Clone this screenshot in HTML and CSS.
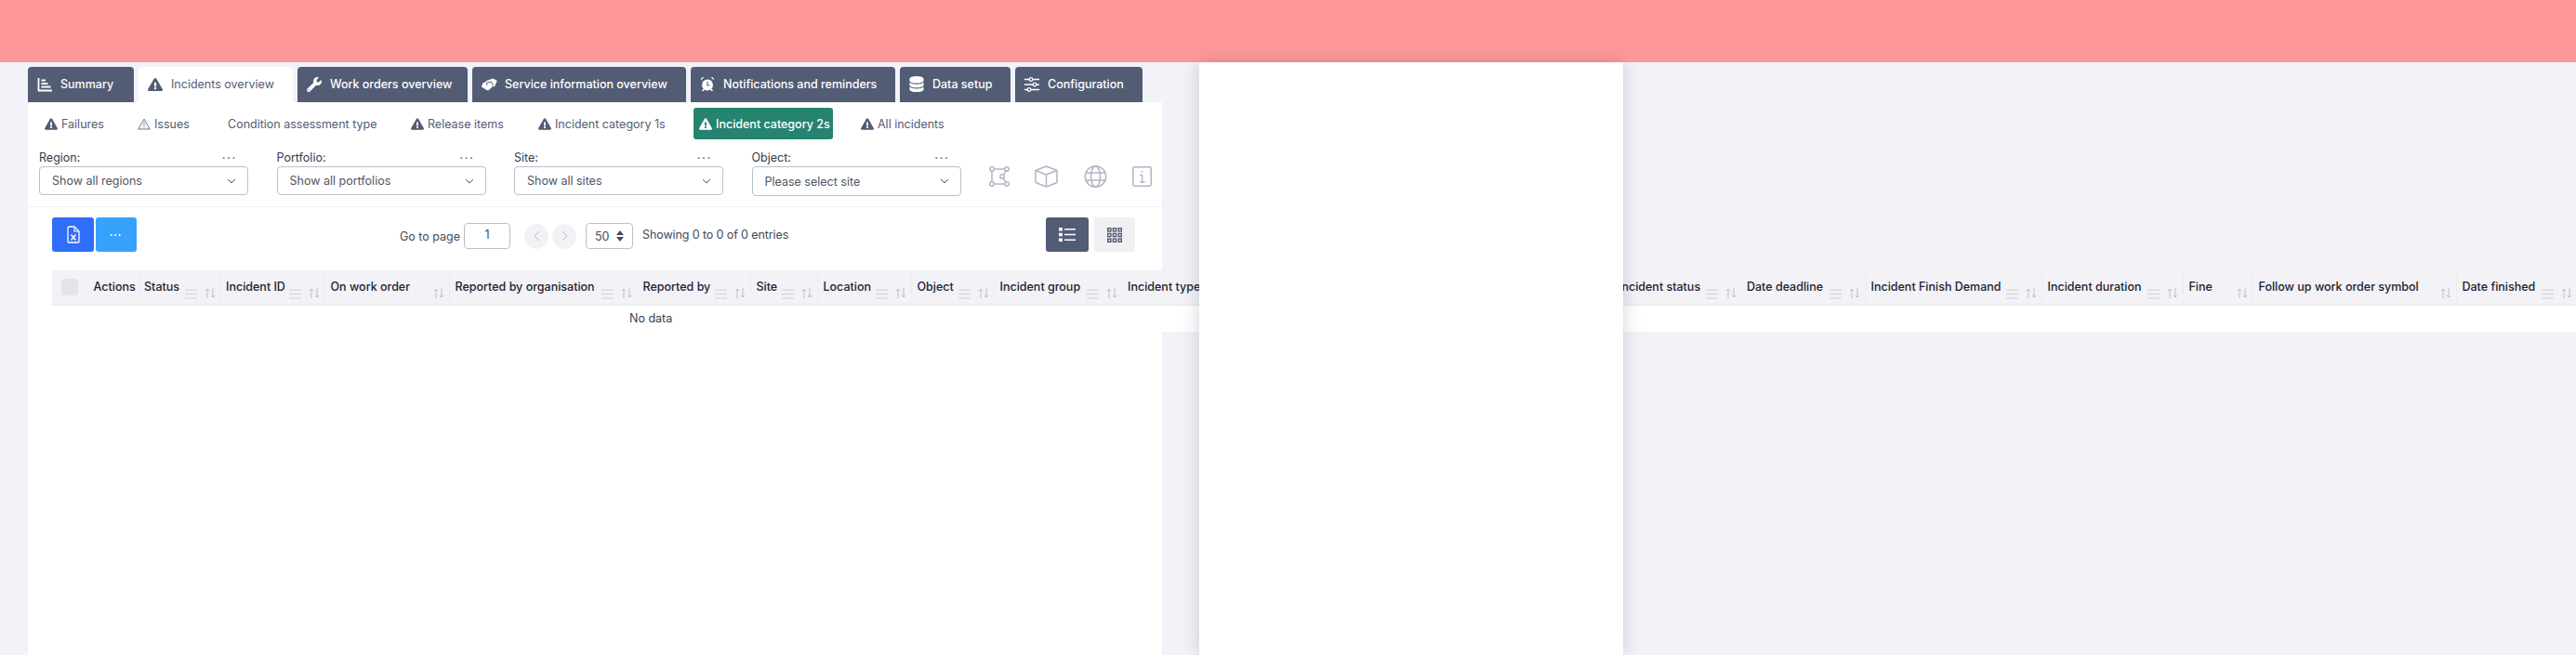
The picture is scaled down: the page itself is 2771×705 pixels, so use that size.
FILE: index.html
```html
<!DOCTYPE html>
<html lang="en">
<head>
<meta charset="utf-8">
<title>Incident category 2s</title>
<link rel="stylesheet" href="styles.css">
</head>
<body>
<svg class="defs" width="0" height="0" aria-hidden="true">
  <symbol id="warn" viewBox="0 0 576 512"><path fill="currentColor" d="M569.517 440.013C587.975 472.007 564.806 512 527.94 512H48.054c-36.937 0-59.999-40.055-41.577-71.987L246.423 23.985c18.467-32.009 64.72-31.951 83.154 0l239.94 416.028zM288 354c-25.405 0-46 20.595-46 46s20.595 46 46 46 46-20.595 46-46-20.595-46-46-46zm-43.673-165.346l7.418 136c.347 6.364 5.609 11.346 11.982 11.346h48.546c6.373 0 11.635-4.982 11.982-11.346l7.418-136c.375-6.874-5.098-12.654-11.982-12.654h-63.383c-6.884 0-12.356 5.78-11.981 12.654z"/></symbol>
  <symbol id="warn-o" viewBox="0 0 18 16"><path fill="none" stroke="currentColor" stroke-width="1.100" stroke-linejoin="round" d="M9 1.200 17 15H1z"/><path fill="currentColor" d="M8.400 5.600h1.200l-.2 5.200h-.8zM8.300 11.800h1.400v1.400H8.300z"/></symbol>
  <symbol id="wrench" viewBox="0 0 512 512"><path fill="currentColor" d="M507.73 109.1c-2.24-9.03-13.54-12.09-20.12-5.51l-74.36 74.36-67.88-11.31-11.31-67.88 74.36-74.36c6.62-6.62 3.43-17.9-5.66-20.16-47.38-11.74-99.55.91-136.58 37.93-39.64 39.64-50.55 97.1-34.05 147.2L18.74 402.76c-24.99 24.99-24.99 65.51 0 90.5 24.99 24.99 65.51 24.99 90.5 0l213.21-213.21c50.12 16.71 107.47 5.68 147.37-34.22 37.07-37.07 49.7-89.32 37.91-136.73zM64 472c-13.25 0-24-10.75-24-24 0-13.26 10.75-24 24-24s24 10.74 24 24c0 13.25-10.75 24-24 24z"/></symbol>
  <symbol id="chevron" viewBox="0 0 10 6"><path fill="none" stroke="#4b5263" stroke-width="1" d="M1 1l4 4 4-4"/></symbol>
  <symbol id="filter" viewBox="0 0 13 11"><path fill="none" stroke="#cdcdd6" stroke-width="1.200" d="M0 1h13M0 5.500h13M0 10h13"/></symbol>
  <symbol id="sort" viewBox="0 0 12 11"><path fill="none" stroke="#bdbdc7" stroke-width="1" d="M3 11V1M.8 3.200 3 1l2.200 2.200M9 0v10M6.800 7.800 9 10l2.200-2.200"/></symbol>
</svg>

<header class="topbar"></header>

<main class="main">
  <nav class="tabs">
    <a class="tab tab-summary">
      <svg class="tab-icon" viewBox="0 0 16 16"><path fill="none" stroke="currentColor" stroke-width="1.800" d="M1.500 1v13.500H16"/><path fill="none" stroke="currentColor" stroke-width="1.800" d="M4.500 3.500h4.500M4.500 7h7M4.500 10.500h10"/></svg>
      <span>Summary</span></a>
    <a class="tab tab-incidents is-active">
      <svg class="tab-icon"><use href="#warn"/></svg>
      <span>Incidents overview</span></a>
    <a class="tab tab-work">
      <svg class="tab-icon"><use href="#wrench"/></svg>
      <span>Work orders overview</span></a>
    <a class="tab tab-service">
      <svg class="tab-icon tab-icon-wide" viewBox="0 0 20 16"><path fill="currentColor" d="M7 3.500 13 1.200c1-.4 2-.3 3 .2l3.800 2.100-3.300 7.200-1.800-.7-4.500 4.300c-1 .9-2.200.8-3.200.1L1 10.800 3 5.600l1.500.3z"/><path fill="none" stroke="#535c75" stroke-width="1.100" d="M7.500 9V5.800l5-1.300 2.700 5"/></svg>
      <span>Service information overview</span></a>
    <a class="tab tab-notify">
      <svg class="tab-icon tab-icon-tall" viewBox="0 0 16 18"><circle cx="8" cy="10" r="6.300" fill="currentColor"/><path fill="currentColor" d="M.6 4.800C.2 2.600 1.800.8 4 1.200zM15.400 4.800C15.800 2.600 14.200.8 12 1.200zM3 14.500 1.500 17h2l1.500-2zM13 14.500 14.500 17h-2L11 15z"/><path fill="none" stroke="#535c75" stroke-width="1.100" d="M8 6v4.500h2.500"/></svg>
      <span>Notifications and reminders</span></a>
    <a class="tab tab-data">
      <svg class="tab-icon tab-icon-tall" viewBox="0 0 16 18"><path fill="currentColor" d="M0 3c0-1.800 3.600-3 8-3s8 1.200 8 3v2c0 1.800-3.600 3-8 3S0 6.800 0 5zM0 7.200C1.500 8.500 4.500 9.200 8 9.200s6.500-.7 8-2V10c0 1.800-3.600 3-8 3s-8-1.200-8-3zM0 12.200c1.500 1.300 4.500 2 8 2s6.500-.7 8-2V15c0 1.800-3.600 3-8 3s-8-1.200-8-3z"/></svg>
      <span>Data setup</span></a>
    <a class="tab tab-config">
      <svg class="tab-icon" viewBox="0 0 16 16"><path fill="none" stroke="currentColor" stroke-width="1.400" d="M0 2.500h5M9 2.500h7M0 8h9M13 8h3M0 13.500h3M7 13.500h9"/><g fill="none" stroke="currentColor" stroke-width="1.300"><circle cx="7" cy="2.500" r="1.800"/><circle cx="11" cy="8" r="1.800"/><circle cx="5" cy="13.500" r="1.800"/></g></svg>
      <span>Configuration</span></a>
  </nav>

  <section class="card">
    <nav class="subtabs">
      <a class="sub sub-fail"><svg class="sub-icon"><use href="#warn"/></svg>Failures</a>
      <a class="sub sub-issue"><svg class="sub-icon"><use href="#warn-o"/></svg>Issues</a>
      <a class="sub sub-cond">Condition assessment type</a>
      <a class="sub sub-rel"><svg class="sub-icon"><use href="#warn"/></svg>Release items</a>
      <a class="sub sub-cat1"><svg class="sub-icon"><use href="#warn"/></svg>Incident category 1s</a>
      <a class="sub sub-cat2 is-active"><svg class="sub-icon"><use href="#warn"/></svg>Incident category 2s</a>
      <a class="sub sub-all"><svg class="sub-icon"><use href="#warn"/></svg>All incidents</a>
    </nav>

    <div class="filters">
      <div class="filter">
        <div class="filter-label"><span>Region:</span><span class="dots">•••</span></div>
        <div class="select"><span>Show all regions</span><svg class="chev"><use href="#chevron"/></svg></div>
      </div>
      <div class="filter">
        <div class="filter-label"><span>Portfolio:</span><span class="dots">•••</span></div>
        <div class="select"><span>Show all portfolios</span><svg class="chev"><use href="#chevron"/></svg></div>
      </div>
      <div class="filter">
        <div class="filter-label"><span>Site:</span><span class="dots">•••</span></div>
        <div class="select"><span>Show all sites</span><svg class="chev"><use href="#chevron"/></svg></div>
      </div>
      <div class="filter">
        <div class="filter-label"><span>Object:</span><span class="dots">•••</span></div>
        <div class="select select-tall"><span>Please select site</span><svg class="chev"><use href="#chevron"/></svg></div>
      </div>
      <div class="views">
        <svg class="view view-shape" viewBox="0 0 22 22"><g fill="none" stroke="#b3b4c6" stroke-width="1.500"><circle cx="3" cy="3" r="2.200"/><circle cx="19" cy="3" r="2.200"/><circle cx="3" cy="19" r="2.200"/><circle cx="19" cy="19" r="2.200"/><circle cx="14" cy="11" r="2.200"/><path d="M5.200 3h11.600M3 5.200v11.600M5.200 19h11.600M18 5l-2.800 4.200M15.200 13l2.800 4"/></g></svg>
        <svg class="view view-cube" viewBox="0 0 25 24"><g fill="none" stroke="#b3b4c6" stroke-width="1.500" stroke-linejoin="round"><path d="M12.500 1 24 5.500v13L12.500 23 1 18.500v-13z"/><path d="M1 5.500 12.500 10 24 5.500M12.500 10v13"/></g></svg>
        <svg class="view view-globe" viewBox="0 0 25 24"><g fill="none" stroke="#b3b4c6" stroke-width="1.500"><circle cx="12.500" cy="12" r="11.200"/><ellipse cx="12.500" cy="12" rx="5" ry="11.200"/><path d="M2 8h21M2 16h21"/></g></svg>
        <svg class="view view-info" viewBox="0 0 21 22"><rect x=".8" y=".8" width="19.400" height="20.400" rx="2" fill="none" stroke="#b3b4c6" stroke-width="1.500"/><path fill="none" stroke="#b3b4c6" stroke-width="1.300" d="M8 9.500h2.700V17M8 17h5.500"/><circle cx="10.500" cy="5.800" r="1" fill="#b3b4c6"/></svg>
      </div>
    </div>

    <div class="toolbar">
      <button class="btn btn-excel"><svg class="excel" viewBox="0 0 14 19"><path fill="none" stroke="#fff" stroke-width="1.300" stroke-linejoin="round" d="M1 2.200C1 1.500 1.500 1 2.200 1H8l5 5v11c0 .6-.5 1-1.200 1H2.200C1.500 18 1 17.600 1 17z"/><path fill="none" stroke="#fff" stroke-width="1.100" d="M8 1v5h5"/><path fill="none" stroke="#fff" stroke-width="1.500" d="M4.500 9.500l5 6M9.500 9.500l-5 6"/></svg></button>
      <button class="btn btn-more"><span class="dots dots-white">•••</span></button>
      <div class="pager">
        <span class="pager-label">Go to page</span>
        <div class="page-input">1</div>
        <div class="circle circle-prev"><svg viewBox="0 0 7 12"><path fill="none" stroke="#b9bac6" stroke-width="1" d="M6 1 1 6l5 5"/></svg></div>
        <div class="circle"><svg viewBox="0 0 7 12"><path fill="none" stroke="#b9bac6" stroke-width="1" d="M1 1l5 5-5 5"/></svg></div>
        <div class="page-size"><span>50</span><svg class="stepper" viewBox="0 0 8 12"><path fill="#444b5c" d="M4 0l4 5H0zM4 12 0 7h8z"/></svg></div>
        <span class="pager-info">Showing 0 to 0 of 0 entries</span>
      </div>
      <div class="toggle">
        <button class="toggle-btn is-on"><svg viewBox="0 0 18 15"><path fill="#fff" d="M0 0h4v3.400H0zM0 5.800h4v3.400H0zM0 11.600h4V15H0z"/><path stroke="#fff" stroke-width="1.400" d="M6 1.700h12M6 7.500h12M6 13.300h12"/></svg></button>
        <button class="toggle-btn"><svg viewBox="0 0 16 16"><g fill="none" stroke="#4f5b76" stroke-width="1.400"><rect x=".7" y=".7" width="3.200" height="3.200"/><rect x="6.400" y=".7" width="3.200" height="3.200"/><rect x="12.100" y=".7" width="3.200" height="3.200"/><rect x=".7" y="6.400" width="3.200" height="3.200"/><rect x="6.400" y="6.400" width="3.200" height="3.200"/><rect x="12.100" y="6.400" width="3.200" height="3.200"/><rect x=".7" y="12.100" width="3.200" height="3.200"/><rect x="6.400" y="12.100" width="3.200" height="3.200"/><rect x="12.100" y="12.100" width="3.200" height="3.200"/></g></svg></button>
      </div>
    </div>

    <div class="table">
      <div class="thead">
        <div class="th c-check"><span class="checkbox"></span></div>
        <div class="th c-actions">Actions</div>
        <div class="th c-status">Status<span class="th-tools"><svg class="i-filter"><use href="#filter"/></svg><svg class="i-sort"><use href="#sort"/></svg></span></div>
        <div class="th c-id">Incident ID<span class="th-tools"><svg class="i-filter"><use href="#filter"/></svg><svg class="i-sort"><use href="#sort"/></svg></span></div>
        <div class="th c-order">On work order<span class="th-tools"><svg class="i-sort"><use href="#sort"/></svg></span></div>
        <div class="th c-org">Reported by organisation<span class="th-tools"><svg class="i-filter"><use href="#filter"/></svg><svg class="i-sort"><use href="#sort"/></svg></span></div>
        <div class="th c-by">Reported by<span class="th-tools"><svg class="i-filter"><use href="#filter"/></svg><svg class="i-sort"><use href="#sort"/></svg></span></div>
        <div class="th c-site">Site<span class="th-tools"><svg class="i-filter"><use href="#filter"/></svg><svg class="i-sort"><use href="#sort"/></svg></span></div>
        <div class="th c-loc">Location<span class="th-tools"><svg class="i-filter"><use href="#filter"/></svg><svg class="i-sort"><use href="#sort"/></svg></span></div>
        <div class="th c-obj">Object<span class="th-tools"><svg class="i-filter"><use href="#filter"/></svg><svg class="i-sort"><use href="#sort"/></svg></span></div>
        <div class="th c-group">Incident group<span class="th-tools"><svg class="i-filter"><use href="#filter"/></svg><svg class="i-sort"><use href="#sort"/></svg></span></div>
        <div class="th c-type">Incident type</div>
        <div class="th c-istatus">Incident status<span class="th-tools"><svg class="i-filter"><use href="#filter"/></svg><svg class="i-sort"><use href="#sort"/></svg></span></div>
        <div class="th c-deadline">Date deadline<span class="th-tools"><svg class="i-filter"><use href="#filter"/></svg><svg class="i-sort"><use href="#sort"/></svg></span></div>
        <div class="th c-demand">Incident Finish Demand<span class="th-tools"><svg class="i-filter"><use href="#filter"/></svg><svg class="i-sort"><use href="#sort"/></svg></span></div>
        <div class="th c-duration">Incident duration<span class="th-tools"><svg class="i-filter"><use href="#filter"/></svg><svg class="i-sort"><use href="#sort"/></svg></span></div>
        <div class="th c-fine">Fine<span class="th-tools"><svg class="i-sort"><use href="#sort"/></svg></span></div>
        <div class="th c-follow">Follow up work order symbol<span class="th-tools"><svg class="i-sort"><use href="#sort"/></svg></span></div>
        <div class="th c-finished">Date finished<span class="th-tools"><svg class="i-filter"><use href="#filter"/></svg><svg class="i-sort"><use href="#sort"/></svg></span></div>
      </div>
      <div class="no-data">No data</div>
    </div>
  </section>
</main>

<aside class="panel"></aside>
</body>
</html>
```
FILE: styles.css
```css
* { box-sizing: border-box; }

html, body { height: 705px; overflow: hidden; }

body {
  margin: 0;
  background: #f2f2f8;
  color: #2b3040;
  font-family: "Inter", "Liberation Sans", sans-serif;
  font-size: 12.5px;
}

.defs { position: absolute; }

.topbar { height: 67px; background: #ff9999; }

.main { padding: 5px 0 0 30px; }

/* Main tabs */
.tabs { display: flex; gap: 5px; height: 38px; }

.tab {
  display: flex;
  align-items: center;
  gap: 9px;
  padding-left: 10px;
  padding-bottom: 1px;
  background: #535c75;
  color: #fff;
  font-weight: 500;
  font-size: 12.5px;
  border-radius: 4px 4px 0 0;
  white-space: nowrap;
}

.tab.is-active { background: #fff; color: #535c75; font-weight: 400; }

.tab-icon { width: 16px; height: 16px; flex: none; }
.tab-icon-wide { width: 18px; margin-right: -1px; margin-left: -1px; }
.tab-icon-tall { height: 17px; }

.tab-summary { width: 114px; }
.tab-incidents { width: 166px; }
.tab-work { width: 183px; }
.tab-service { width: 230px; }
.tab-notify { width: 220px; }
.tab-data { width: 119px; }
.tab-config { width: 137px; }

/* Card */
.card { width: 1220px; height: 595px; background: #fff; }

.subtabs { display: flex; padding: 6px 0 0 12px; height: 40px; }

.sub {
  display: flex;
  align-items: center;
  gap: 4px;
  height: 34px;
  padding-left: 6px;
  color: #535c75;
  font-size: 12.5px;
  border-radius: 3px;
  white-space: nowrap;
}

.sub.is-active { background: #25846f; color: #fff; font-weight: 500; }

.sub-icon { width: 14px; height: 13px; flex: none; }

.sub-fail { width: 100px; }
.sub-issue { width: 97px; }
.sub-cond { width: 197px; }
.sub-rel { width: 137px; }
.sub-cat1 { width: 173px; }
.sub-cat2 { width: 150px; }
.sub-all { margin-left: 24px; width: 120px; }

/* Filters */
.filters {
  display: flex;
  gap: 30.5px;
  height: 73px;
  padding: 10px 0 0 12px;
  border-bottom: 1px solid #f2f2f6;
}

.filter { width: 225px; }

.filter-label {
  display: flex;
  justify-content: space-between;
  align-items: center;
  height: 19px;
  padding-right: 12px;
  color: #343a48;
  font-size: 12.5px;
}

.dots { color: #535c75; font-size: 6px; letter-spacing: 2px; }
.dots-white { color: #fff; font-size: 7px; }

.select {
  display: flex;
  align-items: center;
  justify-content: space-between;
  height: 31px;
  padding: 0 12px 0 13px;
  border: 1px solid #b9c0cc;
  border-radius: 4px;
  color: #4f5562;
  font-size: 12.5px;
}

.select-tall { height: 32px; }

.chev { width: 10px; height: 6px; }

.views { display: flex; gap: 27.5px; margin: 18px 0 0 -0.500px; }
.view { height: 24px; flex: none; }
.view-shape { width: 22px; height: 22px; margin-top: 1px; }
.view-cube, .view-globe { width: 25px; }
.view-info { width: 21px; height: 22px; margin-top: 1px; }

/* Toolbar */
.toolbar { display: flex; padding: 11px 29px 0 26px; height: 68px; }

.btn {
  width: 45px;
  height: 37px;
  margin-right: 2px;
  padding: 0;
  border: 0;
  border-radius: 3px;
  display: flex;
  align-items: center;
  justify-content: center;
}

.btn-excel { background: #2f6dfb; }
.btn-more { background: #36a2fb; width: 44px; margin-right: 0; }
.excel { width: 14px; height: 19px; }

.pager {
  display: flex;
  align-items: center;
  height: 28px;
  margin: 6px 0 0 283px;
  color: #444a58;
  font-size: 12.5px;
}

.pager-label { width: 69px; }

.page-input {
  width: 50px;
  height: 28px;
  border: 1px solid #b9c0cc;
  border-radius: 4px;
  text-align: center;
  line-height: 24px;
}

.circle {
  display: flex;
  align-items: center;
  justify-content: center;
  width: 26px;
  height: 27px;
  margin-left: 4px;
  border-radius: 50%;
  background: #f2f2f6;
}

.circle svg { width: 7px; height: 12px; }
.circle-prev { margin-left: 15px; }

.page-size {
  display: flex;
  align-items: center;
  justify-content: space-between;
  width: 51px;
  height: 28px;
  margin: 0 10px;
  padding: 0 9px;
  border: 1px solid #b9c0cc;
  border-radius: 4px;
}

.stepper { width: 8px; height: 12px; }

.pager-info { white-space: nowrap; letter-spacing: -0.1px; margin-top: -3px; }

.toggle { display: flex; gap: 6px; margin-left: auto; }

.toggle-btn {
  display: flex;
  align-items: center;
  justify-content: center;
  width: 44px;
  height: 37px;
  padding: 0;
  border: 0;
  border-radius: 3px;
  background: #f0f0f2;
}

.toggle-btn svg { width: 16px; height: 16px; }
.toggle-btn.is-on { width: 46px; background: #535c75; }
.toggle-btn.is-on svg { width: 18px; height: 15px; }

/* Table */
.table { width: 2717px; margin-left: 26px; background: #fff; }

.thead {
  display: flex;
  height: 38px;
  background: #f2f2f7;
  border-bottom: 2px solid #ebebf0;
}

.th {
  display: flex;
  align-items: flex-start;
  flex: none;
  padding: 9px 5px 0 5.500px;
  border-right: 1px solid #ececf2;
  color: #1c2230;
  font-size: 12.5px;
  font-weight: 450;
  line-height: 18px;
  white-space: nowrap;
}

.th-tools {
  display: flex;
  gap: 8px;
  margin: 10px 0 0 auto;
}

.i-filter { width: 13px; height: 11px; margin-top: 1px; }
.i-sort { width: 12px; height: 11px; }

.checkbox {
  display: block;
  width: 18px;
  height: 18px;
  margin-left: 4px;
  border-radius: 3px;
  background: #e2e5ec;
}

.c-check { width: 39px; }
.c-actions { width: 54.500px; }
.c-status { width: 88px; }
.c-id { width: 112.500px; }
.c-order { width: 134px; }
.c-org { width: 202px; }
.c-by { width: 122px; }
.c-site { width: 72px; }
.c-loc { width: 101px; }
.c-obj { width: 89px; }
.c-group { width: 137.500px; }
.c-type { width: 528px; }
.c-istatus { width: 138px; }
.c-deadline { width: 133.500px; }
.c-demand { width: 190px; }
.c-duration { width: 152px; }
.c-fine { width: 75px; }
.c-follow { width: 219px; }
.c-finished { width: 130px; }

.no-data {
  height: 28px;
  padding-left: 621px;
  color: #3a404e;
  font-size: 12.5px;
  line-height: 28px;
}

/* Overlay panel */
.panel {
  position: absolute;
  top: 67px;
  left: 1290px;
  width: 456px;
  height: 638px;
  background: #fff;
  box-shadow: 0 0 18px rgba(60, 60, 90, 0.22);
}
```
